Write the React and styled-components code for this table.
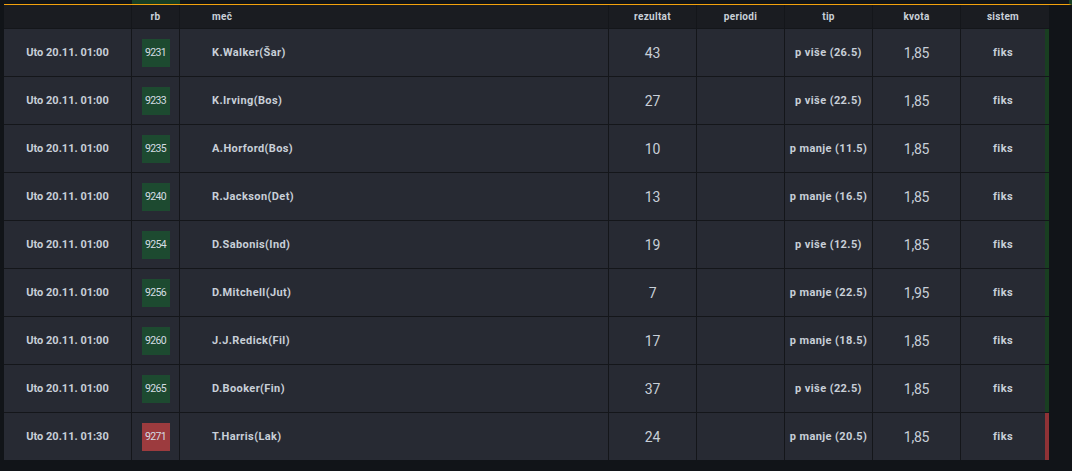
import React from 'react';
import styled, { createGlobalStyle } from 'styled-components';

const rows = [
  { date: 'Uto 20.11. 01:00', rb: '9231', match: 'K.Walker(Šar)', result: '43', tip: 'p više (26.5)', odds: '1,85', won: true },
  { date: 'Uto 20.11. 01:00', rb: '9233', match: 'K.Irving(Bos)', result: '27', tip: 'p više (22.5)', odds: '1,85', won: true },
  { date: 'Uto 20.11. 01:00', rb: '9235', match: 'A.Horford(Bos)', result: '10', tip: 'p manje (11.5)', odds: '1,85', won: true },
  { date: 'Uto 20.11. 01:00', rb: '9240', match: 'R.Jackson(Det)', result: '13', tip: 'p manje (16.5)', odds: '1,85', won: true },
  { date: 'Uto 20.11. 01:00', rb: '9254', match: 'D.Sabonis(Ind)', result: '19', tip: 'p više (12.5)', odds: '1,85', won: true },
  { date: 'Uto 20.11. 01:00', rb: '9256', match: 'D.Mitchell(Jut)', result: '7', tip: 'p manje (22.5)', odds: '1,95', won: true },
  { date: 'Uto 20.11. 01:00', rb: '9260', match: 'J.J.Redick(Fil)', result: '17', tip: 'p manje (18.5)', odds: '1,85', won: true },
  { date: 'Uto 20.11. 01:00', rb: '9265', match: 'D.Booker(Fin)', result: '37', tip: 'p više (22.5)', odds: '1,85', won: true },
  { date: 'Uto 20.11. 01:30', rb: '9271', match: 'T.Harris(Lak)', result: '24', tip: 'p manje (20.5)', odds: '1,85', won: false },
];

const GlobalStyle = createGlobalStyle`
  html, body {
    margin: 0;
    padding: 0;
    background: #111418;
    font-family: Roboto, "Liberation Sans", sans-serif;
  }
`;

const Page = styled.div`
  padding-left: 4px;
  height: 471px;
  background: #111418;
`;

const Table = styled.div`
  width: 1045px;
  display: flex;
  flex-direction: column;
  gap: 1px;
  background: #14161a;
`;

const Cols = styled.div`
  display: grid;
  grid-template-columns: 127px 47px 428px 87px 87px 87px 87px 84px;
  column-gap: 1px;
  background: #14161a;
  border-right: 4px solid ${({ $status }) => $status || 'transparent'};
`;

const TopStub = styled(Cols)`
  height: 4px;
  background: #111418;
  column-gap: 0;
  grid-template-columns: 128px 48px 1fr;
  border-right-width: 3px;
  border-bottom: 1px solid #f3a20c;
`;

const StubFill = styled.div`
  background: ${({ $green }) => ($green ? '#183f24' : 'transparent')};
`;

const HeaderRow = styled(Cols)`
  height: 23px;
  border-right: 4px solid #1a1c21;
`;

const HeadCell = styled.div`
  background: #1a1c21;
  color: #c9d0d8;
  font-size: 10px;
  font-weight: 700;
  letter-spacing: 0.3px;
  display: flex;
  align-items: center;
  justify-content: ${({ $left }) => ($left ? 'flex-start' : 'center')};
  padding-left: ${({ $left }) => ($left ? '32px' : '0')};
`;

const Row = styled(Cols)`
  height: 47px;
`;

const Cell = styled.div`
  background: #272a33;
  color: #c8cfd8;
  font-size: ${({ $big }) => ($big ? '14px' : '11px')};
  font-weight: ${({ $big }) => ($big ? 400 : 700)};
  letter-spacing: ${({ $big, $wide }) => ($big ? '-0.2px' : $wide ? '0.4px' : '0')};
  display: flex;
  align-items: center;
  justify-content: ${({ $left }) => ($left ? 'flex-start' : 'center')};
  padding-left: ${({ $left }) => ($left ? '32px' : '0')};
  white-space: nowrap;
`;

const Badge = styled.span`
  width: 28px;
  height: 28px;
  display: flex;
  align-items: center;
  justify-content: center;
  background: ${({ $won }) => ($won ? '#1d4a30' : '#9c3b3e')};
  color: #d6dde4;
  font-size: 10.5px;
  font-weight: 400;
  letter-spacing: -0.6px;
`;

const headers = ['', 'rb', 'meč', 'rezultat', 'periodi', 'tip', 'kvota', 'sistem'];

export default function App() {
  return (
    <Page>
      <GlobalStyle />
      <TopStub $status="#183f24">
        <StubFill />
        <StubFill $green />
        <StubFill />
      </TopStub>
      <Table>
        <HeaderRow>
          {headers.map((h, i) => (
            <HeadCell key={i} $left={i === 2}>{h}</HeadCell>
          ))}
        </HeaderRow>
        {rows.map((r) => (
          <Row key={r.rb} $status={r.won ? '#193f21' : '#8f3236'}>
            <Cell>{r.date}</Cell>
            <Cell><Badge $won={r.won}>{r.rb}</Badge></Cell>
            <Cell $left $wide>{r.match}</Cell>
            <Cell $big>{r.result}</Cell>
            <Cell />
            <Cell $wide>{r.tip}</Cell>
            <Cell $big>{r.odds}</Cell>
            <Cell $wide>fiks</Cell>
          </Row>
        ))}
      </Table>
    </Page>
  );
}
